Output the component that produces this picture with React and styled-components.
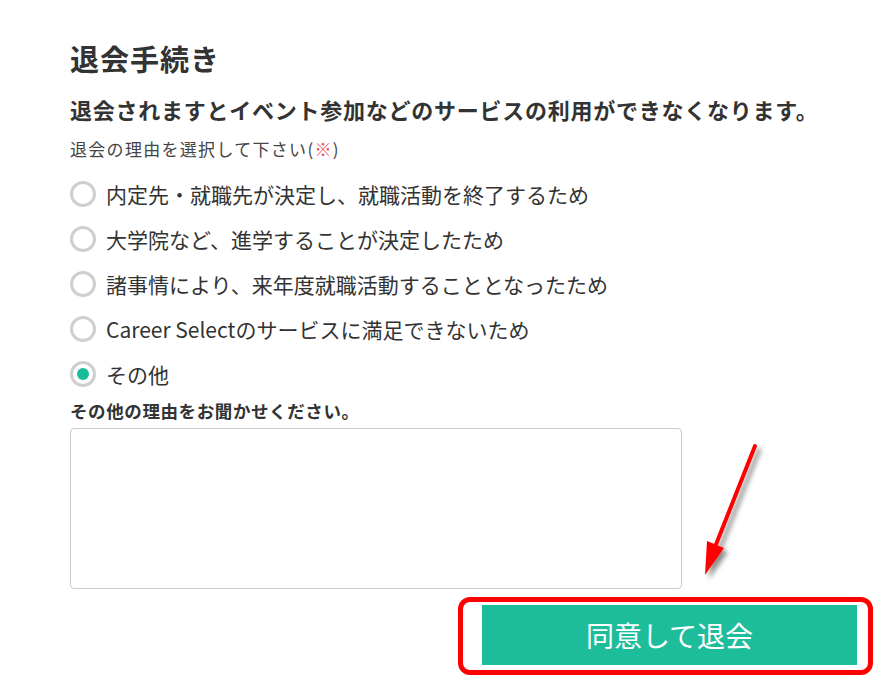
import React from "react";
import styled, { createGlobalStyle } from "styled-components";

const Global = createGlobalStyle`
  html, body { margin: 0; padding: 0; background: #fff; }
  body { font-family: "Noto Sans CJK JP", "Noto Sans", sans-serif; color: #333; }
`;

const Page = styled.div`
  position: relative;
  width: 873px;
  height: 679px;
  overflow: hidden;
  box-sizing: border-box;
  padding: 41px 0 0 70px;
  display: flex;
  flex-direction: column;
`;

const Title = styled.h1`
  margin: 0;
  font-size: 29px;
  line-height: 35px;
  font-weight: 700;
  letter-spacing: 1px;
  color: #333;
`;

const Lead = styled.p`
  margin: 18px 0 0;
  font-size: 22px;
  line-height: 30px;
  font-weight: 700;
  letter-spacing: 0.75px;
  color: #333;
  white-space: nowrap;
`;

const Instruction = styled.p`
  margin: 13px 0 0;
  font-size: 17px;
  line-height: 24px;
  letter-spacing: 1.3px;
  color: #444;
`;

const Mark = styled.span`
  color: #e8505b;
`;

const RadioList = styled.div`
  margin-top: 10px;
  display: flex;
  flex-direction: column;
`;

const RadioRow = styled.label`
  height: 45px;
  display: flex;
  align-items: center;
  gap: 10px;
  font-size: 21px;
  color: #333;
  white-space: nowrap;
`;

const Circle = styled.span`
  width: 26px;
  height: 26px;
  box-sizing: border-box;
  border: 3px solid #cfcfcf;
  border-radius: 50%;
  background: #fff;
  display: flex;
  align-items: center;
  justify-content: center;
  flex: none;
  &::after {
    content: "";
    width: 12px;
    height: 12px;
    border-radius: 50%;
    background: ${(p) => (p.$checked ? "#1abc9c" : "transparent")};
  }
`;

const FieldLabel = styled.div`
  margin-top: 3px;
  font-size: 17.5px;
  line-height: 24px;
  font-weight: 700;
  letter-spacing: 0.6px;
  color: #333;
`;

const TextArea = styled.textarea`
  margin-top: 5px;
  width: 612px;
  height: 161px;
  box-sizing: border-box;
  border: 1px solid #cccccc;
  border-radius: 4px;
  resize: none;
  display: block;
  font-family: inherit;
  font-size: 16px;
  padding: 8px;
`;

const ActionRow = styled.div`
  margin-top: 8px;
  display: flex;
  justify-content: flex-end;
`;

const Highlight = styled.div`
  width: 415px;
  height: 78px;
  box-sizing: border-box;
  border: 5px solid #ff0000;
  border-radius: 12px;
  padding: 3px 11px 5px 19px;
  display: flex;
`;

const SubmitButton = styled.button`
  flex: 1;
  height: 60px;
  border: none;
  background: #1dbd9b;
  color: #fff;
  font-family: "Noto Sans CJK JP", sans-serif;
  font-size: 28px;
  font-weight: 400;
  display: flex;
  align-items: center;
  justify-content: center;
  padding: 0;
`;

const ArrowLayer = styled.svg`
  position: absolute;
  left: 0;
  top: 0;
  pointer-events: none;
`;

const reasons = [
  { text: "内定先・就職先が決定し、就職活動を終了するため" },
  { text: "大学院など、進学することが決定したため" },
  { text: "諸事情により、来年度就職活動することとなったため" },
  { text: "Career Selectのサービスに満足できないため" },
  { text: "その他", checked: true },
];

export default function App() {
  return (
    <>
      <Global />
      <Page>
        <Title>退会手続き</Title>
        <Lead>退会されますとイベント参加などのサービスの利用ができなくなります。</Lead>
        <Instruction>
          退会の理由を選択して下さい(<Mark>※</Mark>)
        </Instruction>
        <RadioList>
          {reasons.map((r) => (
            <RadioRow key={r.text}>
              <Circle $checked={r.checked} />
              {r.text}
            </RadioRow>
          ))}
        </RadioList>
        <FieldLabel>その他の理由をお聞かせください。</FieldLabel>
        <TextArea />
        <ActionRow>
          <Highlight>
            <SubmitButton>同意して退会</SubmitButton>
          </Highlight>
        </ActionRow>
        <ArrowLayer width="873" height="679" viewBox="0 0 873 679">
          <defs>
            <filter id="sh" x="-50%" y="-50%" width="200%" height="200%">
              <feDropShadow dx="4" dy="4" stdDeviation="2.5" floodColor="#000" floodOpacity="0.45" />
            </filter>
          </defs>
          <g filter="url(#sh)">
            <line x1="755" y1="446" x2="713" y2="552" stroke="#ff0000" strokeWidth="4" strokeLinecap="round" />
            <polygon points="705,575 707,541 724,548" fill="#ff0000" />
          </g>
        </ArrowLayer>
      </Page>
    </>
  );
}
